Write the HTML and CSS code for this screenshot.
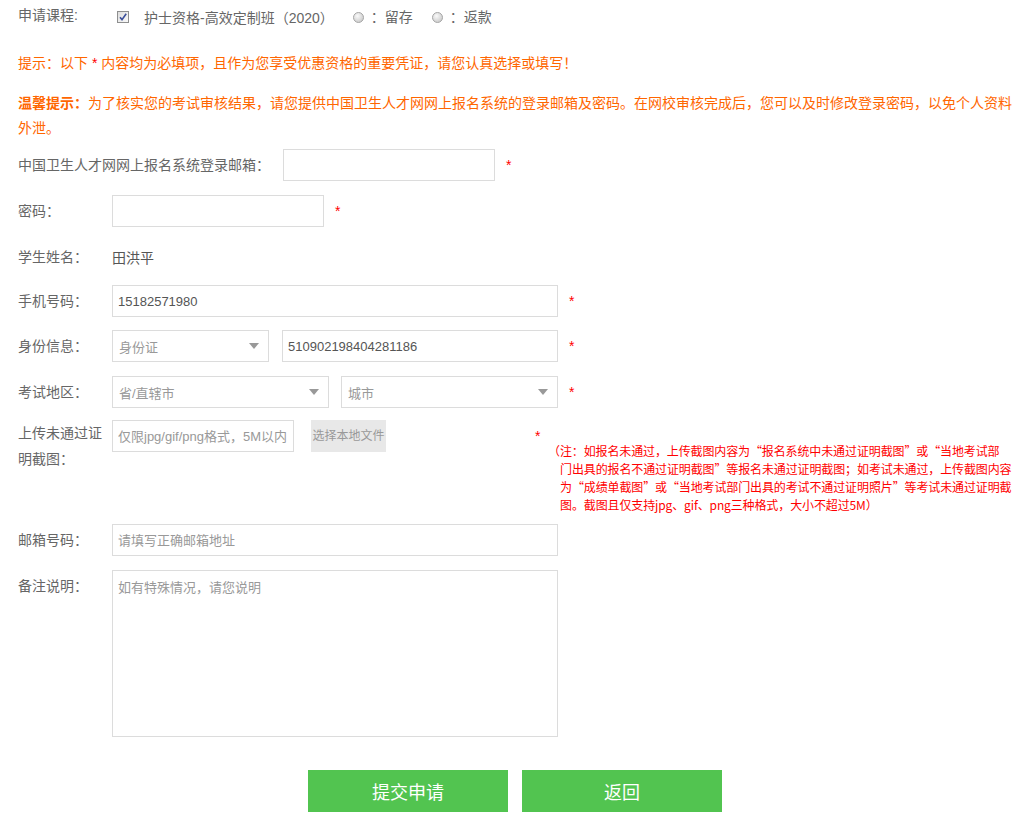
FILE: index.html
```html
<!DOCTYPE html>
<html lang="zh-CN">
<head>
<meta charset="utf-8">
<title>申请课程</title>
<link rel="stylesheet" href="styles.css">
</head>
<body>
<div class="page">
  <div class="course-row">
    <span class="label">申请课程:</span>
    <span class="check"><svg width="12" height="12" viewBox="0 0 12 12"><defs><linearGradient id="cg" x1="0" y1="0" x2="1" y2="1"><stop offset="0" stop-color="#dcdcdc"/><stop offset="1" stop-color="#fbfbfb"/></linearGradient></defs><rect x="0.5" y="0.5" width="11" height="11" fill="url(#cg)" stroke="#8e8f8f"/><path d="M3 6.2 L5 8.6 L9.2 2.8" fill="none" stroke="#3b4f9a" stroke-width="1.6"/></svg></span>
    <span class="course">护士资格-高效定制班（2020）</span>
    <span class="radio"><svg width="11" height="11" viewBox="0 0 11 11"><defs><radialGradient id="rg" cx="0.4" cy="0.35" r="0.7"><stop offset="0" stop-color="#fafafa"/><stop offset="1" stop-color="#c8c8c8"/></radialGradient></defs><circle cx="5.5" cy="5.5" r="5" fill="url(#rg)" stroke="#a6a6a6"/></svg></span>
    <span class="opt">：留存</span>
    <span class="radio"><svg width="11" height="11" viewBox="0 0 11 11"><circle cx="5.5" cy="5.5" r="5" fill="url(#rg)" stroke="#a6a6a6"/></svg></span>
    <span class="opt">：返款</span>
  </div>

  <p class="hint first">提示：以下 <span class="req">*</span> 内容均为必填项，且作为您享受优惠资格的重要凭证，请您认真选择或填写！</p>
  <p class="hint warm"><b class="strong">温馨提示：</b>为了核实您的考试审核结果，请您提供中国卫生人才网网上报名系统的登录邮箱及密码。在网校审核完成后，您可以及时修改登录密码，以免个人资料外泄。</p>

  <div class="row r-email">
    <label class="label auto">中国卫生人才网网上报名系统登录邮箱：</label>
    <input class="field w212" type="text">
    <span class="star">*</span>
  </div>

  <div class="row r-pass">
    <label class="label">密码：</label>
    <input class="field w212" type="password">
    <span class="star">*</span>
  </div>

  <div class="row r-name">
    <label class="label">学生姓名：</label>
    <span class="value">田洪平</span>
  </div>

  <div class="row r-phone">
    <label class="label">手机号码：</label>
    <input class="field w446" type="text" value="15182571980">
    <span class="star">*</span>
  </div>

  <div class="row r-id">
    <label class="label">身份信息：</label>
    <div class="select w157"><span>身份证</span><i class="arrow"></i></div>
    <input class="field w276 ml13" type="text" value="510902198404281186">
    <span class="star">*</span>
  </div>

  <div class="row r-area">
    <label class="label">考试地区：</label>
    <div class="select w217"><span>省/直辖市</span><i class="arrow"></i></div>
    <div class="select w217 ml12"><span>城市</span><i class="arrow"></i></div>
    <span class="star">*</span>
  </div>

  <div class="row r-upload">
    <label class="label two">上传未通过证明截图：</label>
    <input class="field w182" type="text" placeholder="仅限jpg/gif/png格式，5M以内">
    <span class="pick">选择本地文件</span>
    <div class="note-wrap">
      <span class="star block">*</span>
      <p class="note">
        <span>（注：如报名未通过，上传截图内容为“报名系统中未通过证明截图”或“当地考试部</span>
        <span>门出具的报名不通过证明截图”等报名未通过证明截图；如考试未通过，上传截图内容</span>
        <span>为“成绩单截图”或“当地考试部门出具的考试不通过证明照片”等考试未通过证明截</span>
        <span>图。截图且仅支持jpg、gif、png三种格式，大小不超过5M）</span>
      </p>
    </div>
  </div>

  <div class="row r-mail">
    <label class="label">邮箱号码：</label>
    <input class="field w446" type="text" placeholder="请填写正确邮箱地址">
  </div>

  <div class="row r-remark">
    <label class="label">备注说明：</label>
    <textarea class="area" placeholder="如有特殊情况，请您说明"></textarea>
  </div>

  <div class="btns">
    <button class="btn" type="button">提交申请</button>
    <button class="btn" type="button">返回</button>
  </div>
</div>
</body>
</html>
```

FILE: styles.css
```css
html, body {
  margin: 0;
  padding: 0;
  background: #fff;
  overflow: hidden;
}
body {
  font-family: "Liberation Sans", "Noto Sans CJK SC", sans-serif;
  font-size: 14px;
  color: #666;
}
.page {
  width: 1000px;
  padding-left: 18px;
}
.course-row {
  display: flex;
  align-items: center;
  height: 34px;
}
.label {
  width: 94px;
  flex: none;
  color: #666;
  font-size: 14px;
  line-height: 32px;
}
.course-row .label { line-height: 22px; margin-top: -4px; }
.label.auto { width: auto; margin-right: 13px; }
.check { display: flex; margin-left: 5px; }
.course { margin-left: 15px; color: #666; }
.radio { display: flex; margin-left: 19px; }
.opt {
  margin-left: 7px;
  color: #666;
  line-height: 22px;
}
.hint {
  margin: 0;
  color: #ff6600;
  line-height: 25px;
}
.hint.first { margin-top: 17px; }
.hint.warm { margin-top: 14px; }
.strong {
  font-weight: bold;
  font-family: "Noto Sans CJK SC", sans-serif;
}
.req { color: #f00; }
.row {
  display: flex;
  align-items: center;
}
.r-email { margin-top: 8px; }
.r-pass { margin-top: 14px; }
.r-name { margin-top: 14px; height: 32px; }
.r-phone { margin-top: 12px; }
.r-id { margin-top: 13px; }
.r-area { margin-top: 14px; }
.r-upload { margin-top: 12px; align-items: flex-start; }
.r-mail { margin-top: 10px; }
.r-remark { margin-top: 14px; align-items: flex-start; }
.value { color: #555; }
.field {
  box-sizing: border-box;
  height: 32px;
  border: 1px solid #dcdcdc;
  padding: 0 5px;
  margin: 0;
  font-family: "Liberation Sans", "Noto Sans CJK SC", sans-serif;
  font-size: 13px;
  color: #555;
  background: #fff;
  outline: none;
}
.field::placeholder, .area::placeholder { color: #999; opacity: 1; }
.w212 { width: 212px; }
.w446 { width: 446px; }
.w276 { width: 276px; }
.w182 { width: 182px; }
.w157 { width: 157px; }
.w217 { width: 217px; }
.ml13 { margin-left: 13px; }
.ml12 { margin-left: 12px; }
.star {
  color: #f00;
  margin-left: 11px;
  font-size: 14px;
}
.select {
  box-sizing: border-box;
  height: 32px;
  border: 1px solid #dcdcdc;
  display: flex;
  align-items: center;
  justify-content: space-between;
  padding: 0 9px 0 6px;
  font-size: 13px;
  color: #999;
  background: #fff;
}
.arrow {
  width: 0;
  height: 0;
  border-left: 5px solid transparent;
  border-right: 5px solid transparent;
  border-top: 6px solid #999;
}
.label.two { line-height: 26px; }
.pick {
  margin-left: 17px;
  width: 75px;
  height: 32px;
  background: #e8e8e8;
  color: #999;
  font-size: 12px;
  line-height: 32px;
  text-align: center;
  flex: none;
}
.note-wrap {
  margin-left: 149px;
  padding-top: 10px;
  color: #f00;
}
.star.block {
  display: block;
  margin-left: 0;
  line-height: 12px;
  height: 12px;
}
.note {
  margin: 0;
  padding-left: 25px;
  font-family: "Noto Sans CJK SC", "Liberation Sans", sans-serif;
  font-size: 12px;
  line-height: 18px;
  letter-spacing: -0.12px;
  color: #f00;
}
.note span {
  display: block;
  white-space: nowrap;
}
.note span:first-child { margin-left: -12px; }
.area {
  box-sizing: border-box;
  width: 446px;
  height: 167px;
  border: 1px solid #dcdcdc;
  padding: 6px 5px;
  margin: 0;
  resize: none;
  font-family: "Liberation Sans", "Noto Sans CJK SC", sans-serif;
  font-size: 13px;
  color: #555;
  outline: none;
  display: block;
}
.btns {
  display: flex;
  gap: 14px;
  padding-left: 290px;
  margin-top: 33px;
}
.btn {
  width: 200px;
  height: 42px;
  border: none;
  margin: 0;
  padding: 0;
  background: #52c450;
  color: #fff;
  font-family: "Noto Sans CJK SC", sans-serif;
  font-size: 18px;
  cursor: pointer;
}
```
